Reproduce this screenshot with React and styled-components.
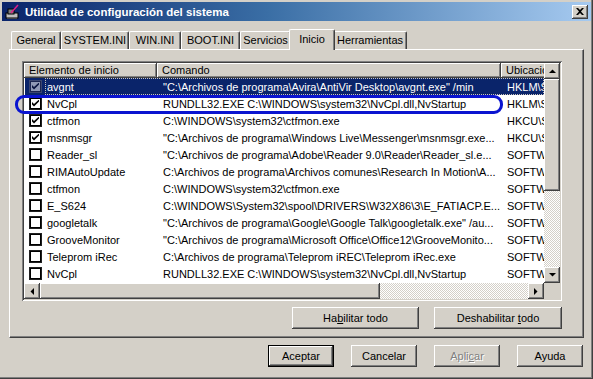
import React from "react";
import styled, { createGlobalStyle, css } from "styled-components";

const Global = createGlobalStyle`
  html, body { margin: 0; padding: 0; background: #d4d0c8; }
  body { font-family: Tahoma, "Liberation Sans", "DejaVu Sans", sans-serif; font-size: 11px; color: #000; }
`;

const raised = css`
  box-shadow: inset -1px -1px #404040, inset 1px 1px #fff, inset -2px -2px #808080, inset 2px 2px #d4d0c8;
`;
const sunken = css`
  box-shadow: inset 1px 1px #808080, inset -1px -1px #fff, inset 2px 2px #404040, inset -2px -2px #d4d0c8;
`;

const Window = styled.div`
  position: relative;
  width: 593px;
  height: 379px;
  box-sizing: border-box;
  padding: 2px 2px 3px 2px;
  background: #d4d0c8;
  box-shadow: inset -1px -1px #404040, inset -2px -2px #808080;
  display: flex;
  flex-direction: column;
`;

const TitleBar = styled.div`
  height: 19px;
  display: flex;
  align-items: center;
  padding: 0 3px 0 3px;
  background: linear-gradient(to right, #0a246a 0%, #3a6ea5 45%, #a6caf0 100%);
  color: #fff;
  font-weight: bold;
  font-size: 11.5px;
  gap: 4px;
`;

const TitleText = styled.span`
  flex: 1;
`;

const CloseBtn = styled.div`
  width: 16px;
  height: 14px;
  background: #d4d0c8;
  ${raised};
  display: flex;
  align-items: center;
  justify-content: center;
`;

const TabStrip = styled.div`
  display: flex;
  align-items: flex-end;
  height: 20px;
  margin: 8px 0 0 9px;
  position: relative;
  z-index: 2;
`;

const Tab = styled.div`
  box-sizing: border-box;
  width: ${(p) => p.$w}px;
  height: ${(p) => (p.$active ? 21 : 18)}px;
  margin: ${(p) => (p.$active ? "0 -2px -1px -2px" : "0")};
  padding-top: ${(p) => (p.$active ? 3 : 2)}px;
  text-align: center;
  background: #d4d0c8;
  border-top: 1px solid #fff;
  border-left: 1px solid #fff;
  border-right: 1px solid #404040;
  border-radius: 2px 2px 0 0;
  box-shadow: inset -1px 0 #808080;
  position: relative;
  z-index: ${(p) => (p.$active ? 2 : 1)};
  white-space: nowrap;
`;

const Panel = styled.div`
  margin: 0 7px 0 7px;
  height: 289px;
  box-sizing: border-box;
  border-top: 1px solid #fff;
  border-left: 1px solid #fff;
  border-right: 1px solid #404040;
  border-bottom: 1px solid #404040;
  box-shadow: inset -1px -1px #808080;
  padding: 11px 21px 0 12px;
  display: flex;
  flex-direction: column;
`;

const List = styled.div`
  height: 240px;
  box-sizing: border-box;
  padding: 2px;
  background: #fff;
  ${sunken};
  display: grid;
  grid-template-columns: 1fr 16px;
  grid-template-rows: 1fr 16px;
`;

const Content = styled.div`
  overflow: hidden;
  background: #fff;
`;

const HeaderRow = styled.div`
  display: flex;
  height: 15px;
`;

const HeaderCell = styled.div`
  box-sizing: border-box;
  flex: 0 0 ${(p) => p.$w}px;
  height: 15px;
  background: #d4d0c8;
  ${raised};
  padding: 1px 0 0 5px;
  white-space: nowrap;
  overflow: hidden;
`;

const Row = styled.div`
  display: flex;
  align-items: center;
  height: 17px;
  position: relative;
  margin-left: 1px;
  background: ${(p) => (p.$sel ? "#0a246a" : "#fff")};
  color: ${(p) => (p.$sel ? "#fff" : "#000")};
  ${(p) =>
    p.$sel &&
    css`
      &::after {
        content: "";
        position: absolute;
        inset: 0 0 0 20px;
        border: 1px dotted #c8c4bc;
        pointer-events: none;
      }
    `}
`;

const Cell = styled.div`
  box-sizing: border-box;
  flex: 0 0 ${(p) => p.$w}px;
  white-space: nowrap;
  overflow: hidden;
  padding-left: ${(p) => p.$pl || 6}px;
  display: flex;
  align-items: center;
  gap: 5px;
`;

const Check = styled.span`
  box-sizing: border-box;
  width: 13px;
  height: 13px;
  flex: 0 0 13px;
  background: ${(p) => (p.$sel ? "#8f98b5" : "#fff")};
  box-shadow: ${(p) =>
    p.$sel
      ? "inset 0 0 0 1px #3a4670, inset 0 0 0 2px #1a2450"
      : "inset 0 0 0 1px #202020, inset 0 0 0 2px #000"};
  display: flex;
  align-items: center;
  justify-content: center;
`;

const VScroll = styled.div`
  display: flex;
  flex-direction: column;
`;

const HScroll = styled.div`
  display: flex;
`;

const ScrollBtn = styled.div`
  box-sizing: border-box;
  width: 16px;
  height: ${(p) => p.$h || 16}px;
  flex: 0 0 auto;
  background: #d4d0c8;
  ${raised};
  display: flex;
  align-items: center;
  justify-content: center;
`;

const Thumb = styled.div`
  box-sizing: border-box;
  background: #d4d0c8;
  ${raised};
  ${(p) => (p.$vertical ? `height: ${p.$size}px; width: 16px;` : `width: ${p.$size}px; height: 16px;`)}
  flex: 0 0 auto;
`;

const Track = styled.div`
  flex: 1;
  background-color: #fff;
  background-image: repeating-conic-gradient(#d4d0c8 0 25%, #fff 0 50%);
  background-size: 2px 2px;
`;

const Corner = styled.div`
  background: #d4d0c8;
`;

const ButtonRow = styled.div`
  display: flex;
  justify-content: flex-end;
  gap: ${(p) => p.$gap}px;
  margin-top: ${(p) => p.$mt}px;
  padding-right: ${(p) => p.$pr || 0}px;
`;

const Button = styled.div`
  box-sizing: border-box;
  width: ${(p) => p.$w}px;
  height: ${(p) => p.$h || 22}px;
  background: #d4d0c8;
  display: flex;
  align-items: center;
  justify-content: center;
  ${(p) =>
    p.$default
      ? css`
          box-shadow: inset 0 0 0 1px #000, inset -2px -2px #404040, inset 2px 2px #fff, inset -3px -3px #808080;
        `
      : raised};
  color: ${(p) => (p.$disabled ? "#808080" : "#000")};
  text-shadow: ${(p) => (p.$disabled ? "1px 1px #fff" : "none")};
`;

const Annot = styled.div`
  position: absolute;
  left: 15px;
  top: 95px;
  width: 488px;
  height: 19px;
  box-sizing: border-box;
  border: 3px solid #0a14d0;
  border-radius: 9px;
  pointer-events: none;
`;

const Tri = ({ dir }) => {
  const pts = {
    up: "0,4 7,4 3.5,0.5",
    down: "0,0 7,0 3.5,3.5",
    left: "4,0 4,7 0.5,3.5",
    right: "0,0 0,7 3.5,3.5",
  }[dir];
  const vert = dir === "up" || dir === "down";
  return (
    <svg width={vert ? 7 : 4} height={vert ? 4 : 7} viewBox={vert ? "0 0 7 4" : "0 0 4 7"}>
      <polygon points={pts} fill="#000" />
    </svg>
  );
};

const CheckMark = ({ color }) => (
  <svg width="7" height="7" viewBox="0 0 7 7">
    <path d="M0 2 L0 4.5 L2 6.5 L7 1.5 L7 -0.5 L2 4 Z" fill={color} />
  </svg>
);

const rows = [
  ["avgnt", '"C:\\Archivos de programa\\Avira\\AntiVir Desktop\\avgnt.exe" /min', "HKLM\\SOFTWARE\\Microsoft", true],
  ["NvCpl", "RUNDLL32.EXE C:\\WINDOWS\\system32\\NvCpl.dll,NvStartup", "HKLM\\SOFTWARE\\Microsoft", true],
  ["ctfmon", "C:\\WINDOWS\\system32\\ctfmon.exe", "HKCU\\SOFTWARE\\Microsoft", true],
  ["msnmsgr", '"C:\\Archivos de programa\\Windows Live\\Messenger\\msnmsgr.exe...', "HKCU\\SOFTWARE\\Microsoft", true],
  ["Reader_sl", '"C:\\Archivos de programa\\Adobe\\Reader 9.0\\Reader\\Reader_sl.e...', "SOFTWARE\\Microsoft", false],
  ["RIMAutoUpdate", "C:\\Archivos de programa\\Archivos comunes\\Research In Motion\\A...", "SOFTWARE\\Microsoft", false],
  ["ctfmon", "C:\\WINDOWS\\system32\\ctfmon.exe", "SOFTWARE\\Microsoft", false],
  ["E_S624", "C:\\WINDOWS\\System32\\spool\\DRIVERS\\W32X86\\3\\E_FATIACP.E...", "SOFTWARE\\Microsoft", false],
  ["googletalk", '"C:\\Archivos de programa\\Google\\Google Talk\\googletalk.exe" /au...', "SOFTWARE\\Microsoft", false],
  ["GrooveMonitor", '"C:\\Archivos de programa\\Microsoft Office\\Office12\\GrooveMonito...', "SOFTWARE\\Microsoft", false],
  ["Teleprom iRec", "C:\\Archivos de programa\\Teleprom iREC\\Teleprom iRec.exe", "SOFTWARE\\Microsoft", false],
  ["NvCpl", "RUNDLL32.EXE C:\\WINDOWS\\system32\\NvCpl.dll,NvStartup", "SOFTWARE\\Microsoft", false],
];

const tabs = [
  ["General", 50],
  ["SYSTEM.INI", 68],
  ["WIN.INI", 52],
  ["BOOT.INI", 59],
  ["Servicios", 51],
  ["Inicio", 46, true],
  ["Herramientas", 74],
];

const AppIcon = () => (
  <svg width="16" height="16" viewBox="0 0 16 16">
    <rect x="1" y="9" width="12" height="5" fill="#c0c0c0" stroke="#000" strokeWidth="1" />
    <rect x="3" y="5" width="6" height="5" fill="#808080" stroke="#000" strokeWidth="1" />
    <line x1="6" y1="9" x2="13" y2="1" stroke="#e0208a" strokeWidth="1.5" />
    <rect x="2" y="14" width="10" height="1" fill="#404040" />
  </svg>
);

export default function App() {
  return (
    <>
      <Global />
      <Window>
        <TitleBar>
          <AppIcon />
          <TitleText>Utilidad de configuración del sistema</TitleText>
          <CloseBtn>
            <svg width="8" height="7" viewBox="0 0 8 7">
              <path d="M0 0 L2 0 L4 2 L6 0 L8 0 L5 3.5 L8 7 L6 7 L4 5 L2 7 L0 7 L3 3.5 Z" fill="#000" />
            </svg>
          </CloseBtn>
        </TitleBar>
        <TabStrip>
          {tabs.map(([t, w, a]) => (
            <Tab key={t} $w={w} $active={a}>
              {t}
            </Tab>
          ))}
        </TabStrip>
        <Panel>
          <List>
            <Content>
              <HeaderRow>
                <HeaderCell $w={133}>Elemento de inicio</HeaderCell>
                <HeaderCell $w={344}>Comando</HeaderCell>
                <HeaderCell $w={60}>Ubicación</HeaderCell>
              </HeaderRow>
              {rows.map(([name, cmd, loc, checked], i) => {
                const sel = i === 0;
                return (
                  <Row key={i} $sel={sel}>
                    <Cell $w={132} $pl={4}>
                      <Check $sel={sel}>{checked && <CheckMark color={sel ? "#0a1440" : "#000"} />}</Check>
                      {name}
                    </Cell>
                    <Cell $w={344}>{cmd}</Cell>
                    <Cell $w={60}>{loc}</Cell>
                  </Row>
                );
              })}
            </Content>
            <VScroll>
              <ScrollBtn>
                <Tri dir="up" />
              </ScrollBtn>
              <Thumb $vertical $size={112} />
              <Track />
              <ScrollBtn>
                <Tri dir="down" />
              </ScrollBtn>
            </VScroll>
            <HScroll>
              <ScrollBtn>
                <Tri dir="left" />
              </ScrollBtn>
              <Thumb $size={340} />
              <Track />
              <ScrollBtn>
                <Tri dir="right" />
              </ScrollBtn>
            </HScroll>
            <Corner />
          </List>
          <ButtonRow $gap={15} $mt={6}>
            <Button $w={127}>
              <span>
                Ha<u>b</u>ilitar todo
              </span>
            </Button>
            <Button $w={128}>
              <span>
                Deshabilitar <u>t</u>odo
              </span>
            </Button>
          </ButtonRow>
        </Panel>
        <ButtonRow $gap={17} $mt={7} $pr={8}>
          <Button $w={66} $default>
            Aceptar
          </Button>
          <Button $w={66}>Cancelar</Button>
          <Button $w={66} $disabled>
            <span>
              Apli<u>c</u>ar
            </span>
          </Button>
          <Button $w={66}>Ayuda</Button>
        </ButtonRow>
        <Annot />
      </Window>
    </>
  );
}
